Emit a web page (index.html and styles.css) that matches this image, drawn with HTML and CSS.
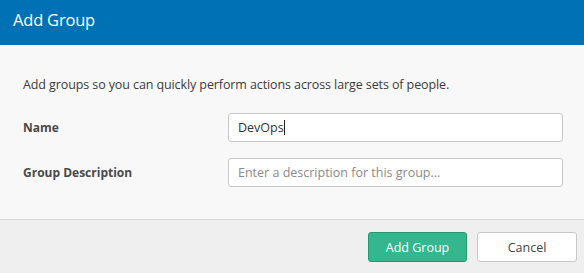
FILE: index.html
```html
<!DOCTYPE html>
<html lang="en">

<head>
    <meta charset="utf-8">
    <title>Add Group</title>
    <link rel="stylesheet" href="styles.css">
</head>

<body>
    <div class="modal">
        <header class="modal-head">
            <h1>Add Group</h1>
        </header>

        <section class="modal-body">
            <p class="intro">Add groups so you can quickly perform actions across large sets of people.</p>

            <div class="row">
                <label for="navn">Name</label>
                <div class="felt"><input id="navn" type="text" value="DevOps"><span class="cursor"></span></div>
            </div>
            <div class="row">
                <label for="beskrivelse">Group Description</label>
                <div class="felt"><input id="beskrivelse" type="text" placeholder="Enter a description for this group..."></div>
            </div>
        </section>

        <footer class="modal-foot">
            <button class="primary">Add Group</button>
            <button class="cancel">Cancel</button>
        </footer>
    </div>
</body>

</html>
```

FILE: styles.css
```css
body {
    margin: 0;
    font-family: "Open Sans", "Liberation Sans", sans-serif;
    background-color: #efefef;
}

.modal {
    width: 584px;
    height: 273px;
    display: flex;
    flex-direction: column;
}

.modal-head {
    background-color: #0071b4;
    height: 45px;
    display: flex;
    align-items: center;
    padding-left: 13px;
}

h1 {
    margin: 0;
    color: white;
    font-weight: normal;
    font-size: 16.5px;
    letter-spacing: -0.2px;
    margin-top: -6px;
}

.modal-body {
    background-color: #f8f8f8;
    height: 174px;
    border-bottom: 1px solid #d4d4d4;
    padding: 0 21px 0 23px;
}

.intro {
    margin: 31px 0 20px;
    font-size: 12.5px;
    color: #3c3c3c;
    letter-spacing: -0.1px;
}

.row {
    display: flex;
    align-items: center;
    margin-bottom: 16px;
}

label {
    width: 205px;
    font-size: 12px;
    font-weight: bold;
    color: #4a4a4a;
}

.felt {
    position: relative;
    flex: 1;
}

input {
    box-sizing: border-box;
    width: 335px;
    height: 29px;
    border: 1px solid #c8c8c8;
    border-radius: 3px;
    background-color: white;
    padding: 0 9px;
    font-family: "Open Sans", "Liberation Sans", sans-serif;
    font-size: 12.5px;
    color: #333;
}

input::placeholder {
    color: #8a8a8a;
}

.cursor {
    position: absolute;
    left: 56px;
    top: 7px;
    width: 1px;
    height: 15px;
    background-color: #222;
}

.modal-foot {
    flex: 1;
    display: flex;
    justify-content: flex-end;
    align-items: center;
    padding-right: 7px;
    padding-top: 1px;
}

button {
    box-sizing: border-box;
    height: 30px;
    width: 100px;
    border-radius: 3px;
    font-family: "Open Sans", "Liberation Sans", sans-serif;
    font-size: 12.5px;
    margin-left: 10px;
    cursor: pointer;
}

.primary {
    background-color: #34b78f;
    border: 1px solid #27966f;
    color: white;
    width: 99px;
}

.cancel {
    background-color: white;
    border: 1px solid #c8c8c8;
    color: #444;
}
```
